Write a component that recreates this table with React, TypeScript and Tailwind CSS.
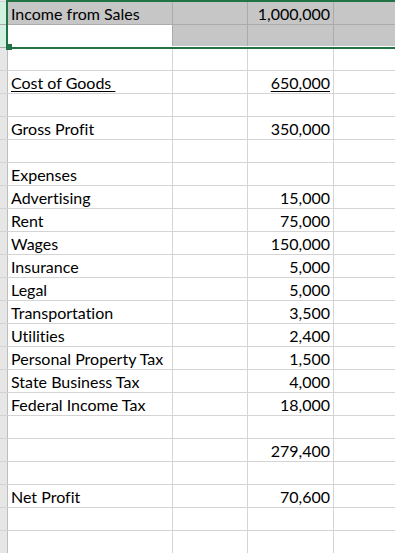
const ROWS: { label?: string; value?: string; underline?: boolean }[] = [
  { label: "Income from Sales", value: "1,000,000" },
  {},
  {},
  { label: "Cost of Goods ", value: "650,000", underline: true },
  {},
  { label: "Gross Profit", value: "350,000" },
  {},
  { label: "Expenses" },
  { label: "Advertising", value: "15,000" },
  { label: "Rent", value: "75,000" },
  { label: "Wages", value: "150,000" },
  { label: "Insurance", value: "5,000" },
  { label: "Legal", value: "5,000" },
  { label: "Transportation", value: "3,500" },
  { label: "Utilities", value: "2,400" },
  { label: "Personal Property Tax", value: "1,500" },
  { label: "State Business Tax", value: "4,000" },
  { label: "Federal Income Tax", value: "18,000" },
  {},
  { value: "279,400" },
  {},
  { label: "Net Profit", value: "70,600" },
  {},
  {},
];

function Row({
  index,
  label,
  value,
  underline,
}: {
  index: number;
  label?: string;
  value?: string;
  underline?: boolean;
}) {
  const selected = index < 2;
  const active = index === 1;

  if (selected) {
    return (
      <div className="flex h-[23px] border-b border-[#ababab]">
        <div className="w-[8px] shrink-0 bg-[#d3f0e0] border-r border-[#9fcfb3]" />
        <div
          className={
            active
              ? "w-[165px] shrink-0 bg-white border-r border-[#ababab]"
              : "w-[165px] shrink-0 bg-[#c6c6c6] border-r border-[#ababab] pl-[3px] leading-[23px] whitespace-pre"
          }
        >
          {label}
        </div>
        <div className="w-[75px] shrink-0 bg-[#c6c6c6] border-r border-[#ababab]" />
        <div className="w-[86px] shrink-0 bg-[#c6c6c6] border-r border-[#ababab] pr-[3px] text-right leading-[23px]">
          {value}
        </div>
        <div className="flex-1 bg-[#c6c6c6]" />
      </div>
    );
  }

  return (
    <div className="flex h-[23px] border-b border-[#d4d4d4]">
      <div className="w-[8px] shrink-0 bg-[#e6e6e6] border-r border-[#bdbdbd]" />
      <div className="w-[165px] shrink-0 border-r border-[#d4d4d4] pl-[3px] leading-[23px] whitespace-pre">
        {label && (
          <span className={underline ? "underline decoration-1 underline-offset-[2px]" : ""}>
            {label}
          </span>
        )}
      </div>
      <div className="w-[75px] shrink-0 border-r border-[#d4d4d4]" />
      <div className="w-[86px] shrink-0 border-r border-[#d4d4d4] pr-[3px] text-right leading-[23px]">
        {value && (
          <span className={underline ? "underline decoration-1 underline-offset-[2px]" : ""}>
            {value}
          </span>
        )}
      </div>
      <div className="flex-1" />
    </div>
  );
}

export default function App() {
  return (
    <div className="relative h-[553px] w-[395px] overflow-hidden bg-white font-['Lato',sans-serif] text-[16px] text-black [font-variant-ligatures:none]">
      {/* sliver of the row above */}
      <div className="flex h-[2px] border-b border-[#d4d4d4]">
        <div className="w-[8px] shrink-0 bg-[#e6e6e6] border-r border-[#bdbdbd]" />
        <div className="w-[165px] shrink-0 border-r border-[#d4d4d4]" />
        <div className="w-[75px] shrink-0 border-r border-[#d4d4d4]" />
        <div className="w-[86px] shrink-0 border-r border-[#d4d4d4]" />
        <div className="flex-1" />
      </div>

      {ROWS.map((r, i) => (
        <Row key={i} index={i} {...r} />
      ))}

      {/* selection outline */}
      <div className="absolute left-[6px] top-0 h-[49px] w-[400px] border-2 border-[#217346]" />
      <div className="absolute left-[8px] right-0 top-[46px] h-px bg-white" />
      <div className="absolute left-[6px] top-[44px] h-[6px] w-[6px] bg-[#217346]" />
    </div>
  );
}
